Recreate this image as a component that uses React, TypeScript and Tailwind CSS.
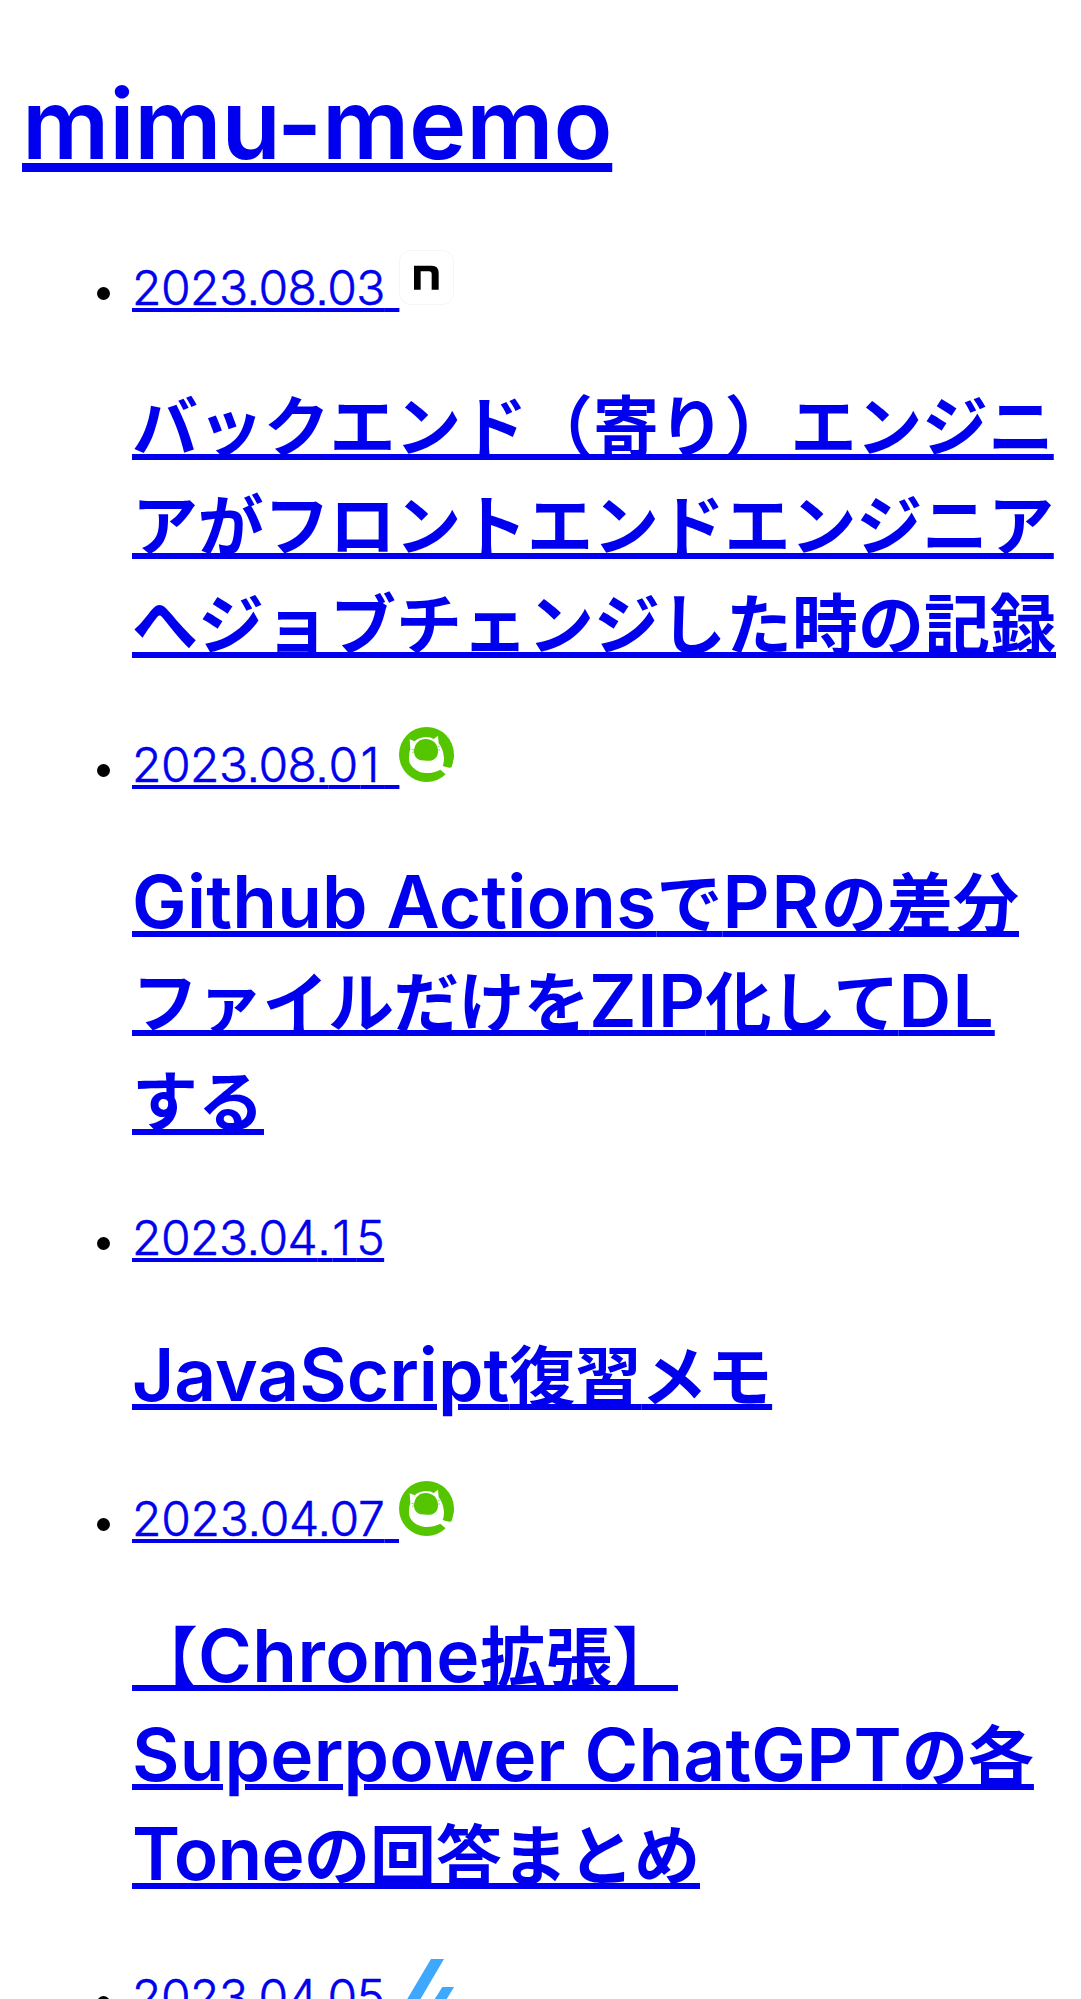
import type { ReactNode } from 'react';

function NoteIcon() {
  return (
    <svg className="h-[55px] w-[55px] shrink-0" viewBox="0 0 165 165" aria-label="note">
      <rect x="1.5" y="1.5" width="162" height="162" rx="33" fill="#fff" stroke="#f5f5f5" strokeWidth="3" />
      <path d="M45 47H98Q119 47 119 69V119H98V72Q98 64 90 64H65V119H45Z" fill="#000" />
    </svg>
  );
}

function QiitaIcon() {
  return (
    <svg className="h-[55px] w-[55px] shrink-0" viewBox="0 0 165 165" aria-label="Qiita">
      <circle cx="82.5" cy="82.5" r="82.5" fill="#55c500" />
      <path
        d="M32 37L47 43Q60 31 80 30Q96 30 104 36L117 26L119 48Q133 66 135 94Q135 108 131 117L142 120L165 118L165 124L142 144L136 139L124 128Q104 139 78 138Q48 135 33 110Q26 92 34 66Z"
        fill="#fff"
      />
      <path d="M150 66L165 84L158 121Q147 124 143 119L137 118Z" fill="#55c500" />
      <path d="M80 36C102 36 116 51 117 70C118 91 106 99 95 101Q80 102 65 100C52 96 44 87 45 70C47 50 60 36 80 36Z" fill="#55c500" />
      <path d="M38 67L45 69M39 76L45 75M117 60L122 58M118 69L123 69" stroke="#55c500" strokeWidth="2" />
    </svg>
  );
}

function ZennIcon() {
  return (
    <svg className="h-[55px] w-[55px] shrink-0" viewBox="0 0 165 165" aria-label="Zenn">
      <path d="M96 0H135L38 165H-2Z" fill="#3ea8ff" />
      <path d="M130 84H165L116 165H79Z" fill="#3ea8ff" />
    </svg>
  );
}

function Latin({ className, children }: { className: string; children: ReactNode }) {
  return <span className={`font-['Inter',sans-serif] text-[73px] leading-none font-semibold ${className}`}>{children}</span>;
}

type Entry = { id: string; date: ReactNode; gap: string; icon?: ReactNode; lines: ReactNode[] };

const entries: Entry[] = [
  {
    id: '0803',
    date: '2023.08.03',
    gap: 'mb-[57px]',
    icon: <NoteIcon />,
    lines: [
      <span className="tracking-[-0.16px]">バックエンド（寄り）エンジニ</span>,
      <span className="tracking-[-0.16px]">アがフロントエンドエンジニア</span>,
      'へジョブチェンジした時の記録',
    ],
  },
  {
    id: '0801',
    date: <>2023.08.<span className="tracking-[2.5px]">0</span><span className="tracking-[5.5px]">1</span></>,
    gap: 'mb-[57px]',
    icon: <QiitaIcon />,
    lines: [
      <><Latin className="tracking-[0.2px]">Github Actions</Latin>で<Latin className="tracking-[1.9px]">PR</Latin>の差分</>,
      <><span className="tracking-[-0.7px]">ファイルだけを</span><Latin className="tracking-[0.5px]">ZIP</Latin><span className="tracking-[-1px]">化して</span><Latin className="tracking-[1.1px]">DL</Latin></>,
      'する',
    ],
  },
  {
    id: '0415',
    date: <>2023.04<span className="tracking-[1.5px]">.</span><span className="tracking-[5px]">1</span>5</>,
    gap: 'mb-[59px]',
    lines: [<><Latin className="tracking-normal">JavaScript</Latin>復習<span className="tracking-[-0.6px]">メモ</span></>],
  },
  {
    id: '0407',
    date: <span className="tracking-[-0.25px]">2023.04.07</span>,
    gap: 'mb-[58px]',
    icon: <QiitaIcon />,
    lines: [
      <>【<Latin className="tracking-[0.46px]">Chrome</Latin>拡張】</>,
      <><Latin className="tracking-[0.2px]">Superpower ChatGPT</Latin>の各</>,
      <><Latin className="tracking-[-0.69px]">Tone</Latin>の回答まとめ</>,
    ],
  },
  { id: '0405', date: '2023.04.05', gap: 'mb-0', icon: <ZennIcon />, lines: [] },
];

export default function App() {
  return (
    <main className="h-[1999px] overflow-hidden bg-white pt-[58px] pl-[22px] text-[#0000ee]">
      <h1 className="mb-[60px] h-[132px] font-['Inter',sans-serif] text-[97px] leading-[132px] font-semibold tracking-[-0.2px] whitespace-nowrap">
        <a href="#" className="underline decoration-[8.5px] underline-offset-[4px]">mimu-memo</a>
      </h1>
      <ul className="pl-[110px]">
        {entries.map((e) => (
          <li key={e.id} className={e.gap}>
            <div className={`-ml-[35px] flex items-baseline ${e.icon ? 'h-[55px]' : 'h-[51px]'}`}>
              <span className={`w-0 ${e.icon ? 'h-[55px]' : 'h-[51px]'}`} />
              <span className={`mr-[22px] h-[13px] w-[13px] self-start rounded-full bg-black ${e.icon ? 'mt-[37px]' : 'mt-[33px]'}`} />
              <a
                href="#"
                className="font-['Inter',sans-serif] text-[48px] leading-none font-light tracking-[-0.5px] whitespace-pre underline decoration-[4px] underline-offset-[3px] [-webkit-text-stroke:0.5px_#0000ee] [font-feature-settings:'ss07']"
              >
                {e.date}
                {e.icon && <span className="tracking-[1px]"> </span>}
              </a>
              {e.icon}
            </div>
            <h2 className="mt-[68px] font-['Noto_Sans_CJK_JP',sans-serif] text-[66px] leading-[99px] font-bold whitespace-nowrap">
              {e.lines.map((line, i) => (
                <a key={i} href="#" className="block h-[99px] underline decoration-[5.5px] underline-offset-[3px]">
                  {line}
                </a>
              ))}
            </h2>
          </li>
        ))}
      </ul>
    </main>
  );
}
